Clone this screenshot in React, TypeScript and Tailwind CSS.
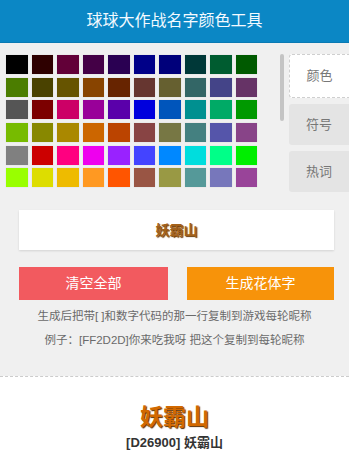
import React from 'react';

const colors: string[] = [
  '#000000', '#2e0000', '#620038', '#440046', '#2a0052', '#000088', '#00007a', '#003838', '#005c30', '#005a00',
  '#4b7d00', '#4a4200', '#665400', '#884400', '#672400', '#663630', '#666030', '#336666', '#444488', '#663366',
  '#555555', '#7c0000', '#cc0066', '#990099', '#5a00aa', '#0000dd', '#0055bb', '#009090', '#00aa66', '#009900',
  '#77bb00', '#888800', '#aa8800', '#cc6600', '#bb4400', '#884444', '#777744', '#448080', '#5555aa', '#884488',
  '#808080', '#cc0000', '#ff0080', '#ee00ee', '#9922ff', '#4444ff', '#0088ff', '#00dddd', '#00ff88', '#00ee00',
  '#99ff00', '#dddd00', '#eebb00', '#ff9922', '#ff5500', '#995544', '#999944', '#559999', '#7777bb', '#994499',
];

const tabs = ['颜色', '符号', '热词'];

export default function App() {
  return (
    <div className="w-[349px] min-h-[451px] bg-[#f0f0f0] font-['Liberation_Sans','Noto_Sans_CJK_SC',sans-serif] overflow-hidden">
      <div className="h-[43px] bg-[#0b87c5] border-b border-[#0a7ab3] flex items-center justify-center text-[#f4faff] text-[16px]">
        球球大作战名字颜色工具
      </div>

      <div className="flex items-start pt-[11px]">
        <div className="ml-[6px] mt-[1px] grid grid-cols-[repeat(10,21.5px)] auto-rows-[19px] gap-x-[4px] gap-y-[3.7px]">
          {colors.map((c, i) => (
            <div key={i} className="shadow-[0_0_1px_rgba(0,0,0,0.15)]" style={{ backgroundColor: c }} />
          ))}
        </div>
        <div className="ml-[23px] w-[4px] h-[67px] rounded-full bg-[#c4c4c4]" />
        <div className="ml-[5px] flex-1 flex flex-col gap-[6px]">
          {tabs.map((t, i) => (
            <div
              key={t}
              className={
                i === 0
                  ? 'h-[44px] flex items-center justify-center text-[13px] text-[#777] bg-white border border-dashed border-[#cfcfcf] border-r-0 rounded-l-[3px]'
                  : 'h-[41px] flex items-center justify-center text-[13px] text-[#777] bg-[#e4e4e4] rounded-l-[3px]'
              }
            >
              {t}
            </div>
          ))}
        </div>
      </div>

      <div className="ml-[19px] mt-[18px] w-[315px] h-[40px] bg-white shadow-[0_1px_2px_rgba(0,0,0,0.12)] flex items-center justify-center text-[14px] font-bold text-[#a3611a] [text-shadow:1px_1px_1px_#6b3a05]">
        妖霸山
      </div>

      <div className="ml-[19px] mt-[17px] w-[315px] flex justify-between">
        <button className="w-[149px] h-[33px] bg-[#f25a5f] text-white text-[14px]">清空全部</button>
        <button className="w-[147px] h-[33px] bg-[#f7930a] text-white text-[14px]">生成花体字</button>
      </div>

      <div className="mt-[4px] text-center text-[11.5px] leading-[24px] text-[#6a6a6a]">
        <p>生成后把带[ ]和数字代码的那一行复制到游戏每轮昵称</p>
        <p>例子：[FF2D2D]你来吃我呀 把这个复制到每轮昵称</p>
      </div>

      <div className="mt-[24px] border-t border-dashed border-[#cccccc] bg-white pt-[26px] pb-[20px] flex flex-col items-center">
        <div className="text-[23px] leading-[28px] font-bold text-[#d26900] [text-shadow:1px_1px_1px_#5a2d00]">
          妖霸山
        </div>
        <div className="text-[13px] leading-[18px] font-bold text-[#333] mt-[3px]">[D26900] 妖霸山</div>
      </div>
    </div>
  );
}
